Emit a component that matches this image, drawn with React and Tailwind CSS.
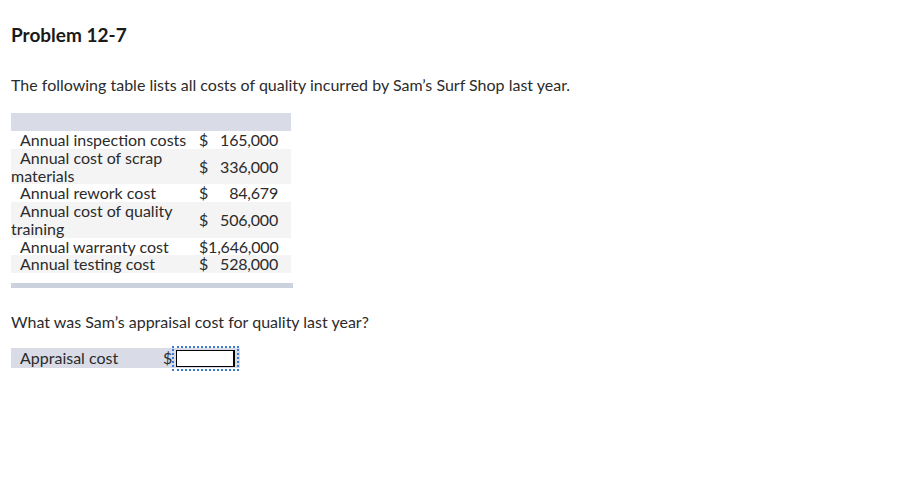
const rows = [
  { label: "Annual inspection costs", amount: "165,000", pad: "\u00a0" },
  { label: "Annual cost of scrap materials", amount: "336,000", pad: "\u00a0" },
  { label: "Annual rework cost", amount: "84,679", pad: "\u00a0\u00a0\u00a0\u00a0" },
  { label: "Annual cost of quality training", amount: "506,000", pad: "\u00a0" },
  { label: "Annual warranty cost", amount: "1,646,000", pad: "" },
  { label: "Annual testing cost", amount: "528,000", pad: "\u00a0" },
];

function App() {
  return (
    <div className="min-h-screen bg-white pl-[11px] pt-[24px] text-[16px] leading-[18px] text-[#2b2b2b] [font-family:Lato,'Open_Sans',sans-serif]">
      <h1 className="text-[19px] font-bold leading-[22px] text-[#1a1a1a]">Problem 12-7</h1>
      <p className="mt-[30px]">
        The following table lists all costs of quality incurred by Sam’s Surf Shop last year.
      </p>

      <div className="mt-[19px] w-[280px] leading-[17.75px]">
        <div className="h-[18px] bg-[#d9dce6]" />
        {rows.map((row, i) => (
          <div
            key={row.label}
            className={`flex items-center ${i % 2 === 1 ? "bg-[#f4f4f4]" : "bg-white"}`}
          >
            <div className="w-[186px] indent-[9px]">{row.label}</div>
            <div className="flex w-[81px] justify-between pl-[2px] tracking-[-0.2px]">
              <span>${row.pad}</span>
              <span>{row.amount}</span>
            </div>
          </div>
        ))}
      </div>
      <div className="mt-[10px] h-[5px] w-[282px] bg-[#ccd1de]" />

      <p className="mt-[25px]">What was Sam’s appraisal cost for quality last year?</p>

      <div className="mt-[17px] flex h-[20px] w-[229px] items-center bg-[#d9dce6]">
        <span className="w-[152px] pl-[9px]">Appraisal cost</span>
        <span>$</span>
        <div className="ml-[3px] p-[1px] outline-2 outline-dotted outline-[#3b7bd4] outline-offset-[1px]">
          <div className="h-[17px] w-[59px] border border-r-2 border-black bg-white" />
        </div>
      </div>
    </div>
  );
}

export default App;
